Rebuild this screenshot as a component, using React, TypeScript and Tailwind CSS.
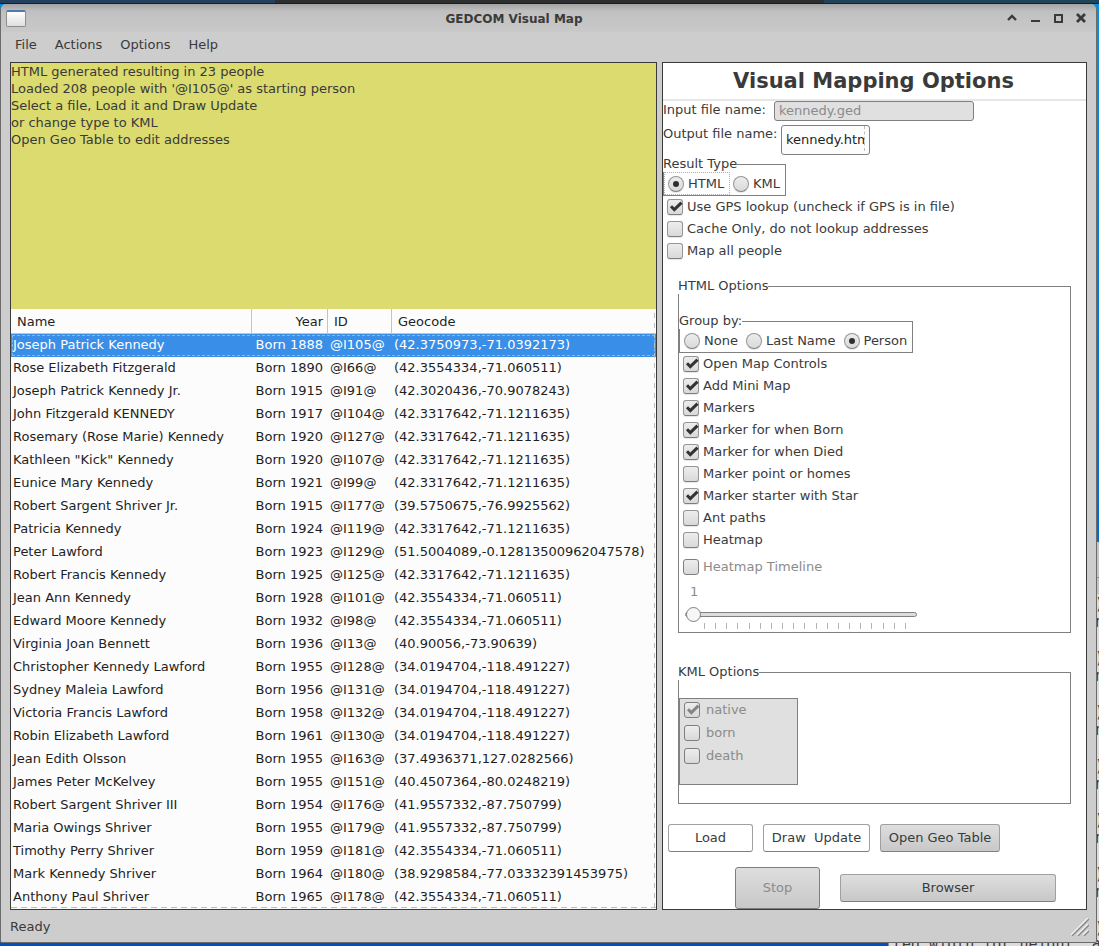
import { useState, type ReactNode } from "react";

const people: [string, string, string, string][] = [
  ["Joseph Patrick Kennedy", "Born 1888", "@I105@", "(42.3750973,-71.0392173)"],
  ["Rose Elizabeth Fitzgerald", "Born 1890", "@I66@", "(42.3554334,-71.060511)"],
  ["Joseph Patrick Kennedy Jr.", "Born 1915", "@I91@", "(42.3020436,-70.9078243)"],
  ["John Fitzgerald KENNEDY", "Born 1917", "@I104@", "(42.3317642,-71.1211635)"],
  ["Rosemary (Rose Marie) Kennedy", "Born 1920", "@I127@", "(42.3317642,-71.1211635)"],
  ['Kathleen "Kick" Kennedy', "Born 1920", "@I107@", "(42.3317642,-71.1211635)"],
  ["Eunice Mary Kennedy", "Born 1921", "@I99@", "(42.3317642,-71.1211635)"],
  ["Robert Sargent Shriver Jr.", "Born 1915", "@I177@", "(39.5750675,-76.9925562)"],
  ["Patricia Kennedy", "Born 1924", "@I119@", "(42.3317642,-71.1211635)"],
  ["Peter Lawford", "Born 1923", "@I129@", "(51.5004089,-0.12813500962047578)"],
  ["Robert Francis Kennedy", "Born 1925", "@I125@", "(42.3317642,-71.1211635)"],
  ["Jean Ann Kennedy", "Born 1928", "@I101@", "(42.3554334,-71.060511)"],
  ["Edward Moore Kennedy", "Born 1932", "@I98@", "(42.3554334,-71.060511)"],
  ["Virginia Joan Bennett", "Born 1936", "@I13@", "(40.90056,-73.90639)"],
  ["Christopher Kennedy Lawford", "Born 1955", "@I128@", "(34.0194704,-118.491227)"],
  ["Sydney Maleia Lawford", "Born 1956", "@I131@", "(34.0194704,-118.491227)"],
  ["Victoria Francis Lawford", "Born 1958", "@I132@", "(34.0194704,-118.491227)"],
  ["Robin Elizabeth Lawford", "Born 1961", "@I130@", "(34.0194704,-118.491227)"],
  ["Jean Edith Olsson", "Born 1955", "@I163@", "(37.4936371,127.0282566)"],
  ["James Peter McKelvey", "Born 1955", "@I151@", "(40.4507364,-80.0248219)"],
  ["Robert Sargent Shriver III", "Born 1954", "@I176@", "(41.9557332,-87.750799)"],
  ["Maria Owings Shriver", "Born 1955", "@I179@", "(41.9557332,-87.750799)"],
  ["Timothy Perry Shriver", "Born 1959", "@I181@", "(42.3554334,-71.060511)"],
  ["Mark Kennedy Shriver", "Born 1964", "@I180@", "(38.9298584,-77.03332391453975)"],
  ["Anthony Paul Shriver", "Born 1965", "@I178@", "(42.3554334,-71.060511)"],
];

const log = [
  "HTML generated resulting in 23 people",
  "Loaded 208 people with '@I105@' as starting person",
  "Select a file, Load it and Draw Update",
  "or change type to KML",
  "Open Geo Table to edit addresses",
];

const mapOptions: [string, boolean][] = [
  ["Open Map Controls", true],
  ["Add Mini Map", true],
  ["Markers", true],
  ["Marker for when Born", true],
  ["Marker for when Died", true],
  ["Marker point or homes", false],
  ["Marker starter with Star", true],
  ["Ant paths", false],
  ["Heatmap", false],
];

function Check({ label, checked = false, disabled = false, className = "h-[22px] gap-1" }: {
  label: string;
  checked?: boolean;
  disabled?: boolean;
  className?: string;
}) {
  return (
    <label className={`flex items-center ${disabled ? "text-[#8b8b8b]" : ""} ${className}`}>
      <span className="relative flex size-4 shrink-0">
        <input
          type="checkbox"
          defaultChecked={checked}
          disabled={disabled}
          className="peer size-4 appearance-none rounded-[3px] border border-[#969696] border-b-[#7d7d7d] bg-linear-to-b from-[#ededed] to-[#d9d9d9] shadow-[0_1px_1px_#0000001a] disabled:border-[#7f7f7f] disabled:shadow-none"
        />
        <svg viewBox="0 0 16 16" className="pointer-events-none absolute inset-0 hidden size-4 peer-checked:block">
          <path d="M4 7.300 7.300 10.600 14.500 3.600" fill="none" stroke={disabled ? "#858585" : "#333333"} strokeWidth="3" />
        </svg>
      </span>
      {label}
    </label>
  );
}

function Radio({ name, label, checked = false, className = "" }: {
  name: string;
  label: string;
  checked?: boolean;
  className?: string;
}) {
  return (
    <label className={`flex items-center gap-1 ${className}`}>
      <span className="relative flex size-4 shrink-0 items-center justify-center">
        <input
          type="radio"
          name={name}
          defaultChecked={checked}
          className="peer size-4 appearance-none rounded-full border border-[#969696] border-b-[#7d7d7d] bg-linear-to-b from-[#ededed] to-[#d9d9d9] shadow-[0_1px_1px_#0000001a]"
        />
        <span className="pointer-events-none absolute hidden size-[6px] rounded-full bg-[#2f2f2f] peer-checked:block" />
      </span>
      {label}
    </label>
  );
}

function Group({ title, className = "", children }: { title: string; className?: string; children: ReactNode }) {
  return (
    <fieldset className={`border border-[#808080] ${className}`}>
      <legend className="-ml-px h-4 bg-white leading-4">{title}</legend>
      {children}
    </fieldset>
  );
}

function PushButton({ className, disabled, children }: { className: string; disabled?: boolean; children: ReactNode }) {
  return (
    <button
      type="button"
      disabled={disabled}
      className={`rounded-[3px] border border-[#a0a0a0] border-b-[#7f7f7f] whitespace-pre disabled:border-[#7f7f7f] disabled:text-[#8b8b8b] ${className}`}
    >
      {children}
    </button>
  );
}

function Desktop() {
  return (
    <div aria-hidden="true" className="absolute inset-0 overflow-hidden bg-linear-to-b from-[#0a90e0] to-[#0050c4] font-['DejaVu_Sans_Mono',monospace] text-[15px] leading-[18px] text-[#3c3c3c]">
      <div className="absolute inset-x-0 top-0 h-1 border-b border-[#1c1e20] bg-linear-to-r from-[#24405e] from-10% to-[#1f4458]">
        <div className="mx-auto h-[3px] w-1/2 bg-[#2c2e30]" />
      </div>
      <div className="absolute top-[542px] right-0 bottom-0 left-[888px] border-l border-[#8a8a8a] bg-[#dcdcdc]">
        <div className="h-9 border-b border-[#8e8e8e] bg-[#c4c4c4]" />
        <div className="h-4 bg-[#c4c4c4]" />
        <div className="absolute top-[53px] -right-[5px] whitespace-pre">
          {[0, 1, 2, 3, 4, 5].map((n) => (
            <div key={n} className="h-[54px]">
              <div>)</div>
              <div>n</div>
            </div>
          ))}
          <div>)</div>
        </div>
        <div className="absolute top-[393px] left-1 whitespace-pre">red width for height: a</div>
      </div>
    </div>
  );
}

export default function App() {
  const [selected, setSelected] = useState(0);

  return (
    <div className="relative flex min-h-screen flex-col overflow-hidden pt-1 pr-[2px] pb-1 font-['DejaVu_Sans','Liberation_Sans',sans-serif] text-[13px] text-[#3a3a3a]">
      <Desktop />
      <div className="relative flex grow flex-col rounded-t-[6px] rounded-b-[2px] border border-t-0 border-[#6b6b6b] bg-[#cdcdcd]">
        <header className="flex h-7 items-center rounded-t-[6px] bg-linear-to-b from-[#a2a2a2] via-[#c0c0c0] via-25% to-[#c9c9c9] pr-[10px] pl-[5px]">
          <div className="h-[17px] w-5 rounded-[2px] border border-[#8d8d8d] border-t-2 border-t-[#4f79b0] bg-linear-to-b from-white to-[#dde0dc]" />
          <h1 className="grow pt-px pr-[5px] text-center text-[12px] font-bold">GEDCOM Visual Map</h1>
          <div className="flex gap-[13px]">
            <button type="button" aria-label="Shade">
              <svg viewBox="0 0 10 10" className="size-[10px]"><path d="M1 7 5 3 9 7" fill="none" stroke="#3a3a3a" strokeWidth="2.4" /></svg>
            </button>
            <button type="button" aria-label="Minimize">
              <svg viewBox="0 0 10 10" className="size-[10px]"><path d="M1 8h9" stroke="#3a3a3a" strokeWidth="2" /></svg>
            </button>
            <button type="button" aria-label="Maximize">
              <svg viewBox="0 0 10 10" className="size-[10px]"><path d="M2 2h7v7H2z" fill="none" stroke="#3a3a3a" strokeWidth="2" /></svg>
            </button>
            <button type="button" aria-label="Close">
              <svg viewBox="0 0 10 10" className="size-[10px]"><path d="M1 1 9 9M9 1 1 9" stroke="#3a3a3a" strokeWidth="2.8" /></svg>
            </button>
          </div>
        </header>

        <nav className="flex h-[30px] items-start gap-[18px] pt-[5px] pl-[14px] leading-4">
          {["File", "Actions", "Options", "Help"].map((item) => (
            <button key={item} type="button">{item}</button>
          ))}
        </nav>

        <main className="flex grow gap-[5px] px-[9px]">
          <section className="relative flex min-w-0 grow flex-col border border-[#3a3a3a] bg-[#fcfcfc]">
            <div className="h-[246px] bg-[#dbdb70] leading-[17px]">
              {log.map((line) => (
                <p key={line}>{line}</p>
              ))}
            </div>
            <table className="w-full table-fixed border-separate border-spacing-0 text-left whitespace-nowrap text-[#1f1f1f]">
              <colgroup>
                <col className="w-[241px]" />
                <col className="w-[76px]" />
                <col className="w-[64px]" />
                <col />
              </colgroup>
              <thead>
                <tr className="h-[25px] [&>th]:border-b [&>th]:border-[#c4c4c4] [&>th]:p-0 [&>th]:pt-px [&>th]:pl-[6px] [&>th]:font-normal">
                  <th className="border-r">Name</th>
                  <th className="border-r text-right"><span className="pr-1">Year</span></th>
                  <th className="border-r">ID</th>
                  <th>Geocode</th>
                </tr>
              </thead>
              <tbody>
                {people.map(([name, year, id, geo], i) => (
                  <tr
                    key={id}
                    onClick={() => setSelected(i)}
                    className={`h-[23px] leading-4 [&>td]:p-0 [&>td]:pb-px [&>td]:pl-[2px] ${
                      i === selected ? "bg-[#398ee7] text-white outline-1 -outline-offset-2 outline-dashed outline-[#7fb8f2]" : ""
                    }`}
                  >
                    <td>{name}</td>
                    <td className="text-right"><span className="pr-[5px]">{year}</span></td>
                    <td>{id}</td>
                    <td>{geo}</td>
                  </tr>
                ))}
              </tbody>
            </table>
            <div className="pointer-events-none absolute inset-x-0 bottom-px h-px bg-[repeating-linear-gradient(90deg,#bdbdbd_0_6px,transparent_6px_10px)]" />
            <div className="pointer-events-none absolute top-[250px] right-px bottom-0 w-px bg-[repeating-linear-gradient(180deg,#bdbdbd_0_5px,transparent_5px_10px)]" />
          </section>

          <section className="flex w-[425px] shrink-0 flex-col border border-[#3a3a3a] bg-white">
            <h2 className="h-[38px] border-b-2 border-[#e6e6e6] pr-[2px] text-center text-[21px] leading-[37px] font-bold">
              Visual Mapping Options
            </h2>

            <div className="flex h-6 items-start">
              <label htmlFor="input-file" className="w-[111px] leading-[17px]">Input file name:</label>
              <input
                id="input-file"
                disabled
                defaultValue="kennedy.ged"
                className="h-5 w-[200px] rounded-[3px] border border-[#808080] bg-[#e0e0e0] px-1 pb-px text-[#8b8b8b]"
              />
            </div>
            <div className="flex h-[31px] items-start">
              <label htmlFor="output-file" className="w-[118px] leading-[17px]">Output file name:</label>
              <div className="relative h-[30px] w-[89px]">
                <input
                  id="output-file"
                  defaultValue="kennedy.html"
                  className="h-full w-full rounded-[3px] border border-[#808080] bg-[#fcfcfc] px-1 pb-[2px] text-[#1f1f1f]"
                />
                <span className="pointer-events-none absolute top-px right-[5px] bottom-1 border-l border-dashed border-[#bdbdbd]" />
              </div>
            </div>

            <Group title="Result Type" className="w-[123px]">
              <div className="flex h-[23px] items-center">
                <Radio name="result" label="HTML" checked className="h-[23px] w-[66px] border border-dotted border-[#b0b0b0] pl-[3px]" />
                <Radio name="result" label="KML" className="pl-[3px]" />
              </div>
            </Group>

            <div className="pl-1">
              <Check label="Use GPS lookup (uncheck if GPS is in file)" checked />
              <Check label="Cache Only, do not lookup addresses" />
              <Check label="Map all people" />
            </div>

            <Group title="HTML Options" className="mt-4 mr-[15px] ml-[15px] h-[355px]">
              <Group title="Group by:" className="mt-[19px] w-[234px]">
                <div className="flex h-[23px] items-center gap-2 pl-1">
                  <Radio name="group" label="None" />
                  <Radio name="group" label="Last Name" />
                  <Radio name="group" label="Person" checked />
                </div>
              </Group>
              <div className="pl-1">
                {mapOptions.map(([label, on]) => (
                  <Check key={label} label={label} checked={on} />
                ))}
                <Check label="Heatmap Timeline" disabled className="mt-[5px] h-[22px] gap-1" />
              </div>
              <div className="pt-[6px] pl-[6px]">
                <label htmlFor="timeline" className="block pl-[5px] leading-4 text-[#8b8b8b]">1</label>
                <input
                  id="timeline"
                  type="range"
                  disabled
                  min={1}
                  max={20}
                  defaultValue={1}
                  className="mt-[6px] block h-4 w-[232px] appearance-none bg-transparent [&::-webkit-slider-runnable-track]:h-[5px] [&::-webkit-slider-runnable-track]:rounded-full [&::-webkit-slider-runnable-track]:border [&::-webkit-slider-runnable-track]:border-[#808080] [&::-webkit-slider-runnable-track]:bg-[#dcdcdc] [&::-webkit-slider-thumb]:-mt-[6px] [&::-webkit-slider-thumb]:size-[15px] [&::-webkit-slider-thumb]:appearance-none [&::-webkit-slider-thumb]:rounded-full [&::-webkit-slider-thumb]:border [&::-webkit-slider-thumb]:border-[#808080] [&::-webkit-slider-thumb]:bg-[#f6f6f6]"
                />
                <div className="mt-px ml-[19px] flex h-[6px] w-[202px] justify-between">
                  {Array.from({ length: 19 }, (_, n) => (
                    <span key={n} className="w-px bg-[#b4b4b4]" />
                  ))}
                </div>
              </div>
            </Group>

            <Group title="KML Options" className="mt-[31px] mr-[15px] ml-[15px] h-[140px]">
              <div className="mt-[18px] h-[87px] w-[119px] border border-[#808080] bg-[#e0e0e0] pl-1">
                <Check label="native" checked disabled className="h-[22px] gap-[6px]" />
                <Check label="born" disabled className="h-6 gap-[6px]" />
                <Check label="death" disabled className="h-[22px] gap-[6px]" />
              </div>
            </Group>

            <div className="mt-5 flex gap-[10px] pl-[5px]">
              <PushButton className="h-7 w-[85px] bg-white">Load</PushButton>
              <PushButton className="h-7 w-[107px] bg-white">{"Draw  Update"}</PushButton>
              <PushButton className="h-7 w-[120px] bg-linear-to-b from-[#dedede] to-[#c8c8c8]">Open Geo Table</PushButton>
            </div>
            <div className="mt-[15px] flex items-center gap-5 pr-[30px] pl-[72px]">
              <PushButton disabled className="h-[42px] w-[85px] bg-linear-to-b from-[#dedede] to-[#c8c8c8]">Stop</PushButton>
              <PushButton className="h-7 grow bg-linear-to-b from-[#dedede] to-[#c8c8c8]">Browser</PushButton>
            </div>
          </section>
        </main>

        <footer className="flex h-8 items-center justify-between pr-[7px] pl-[9px]">
          <span className="pt-[2px]">Ready</span>
          <svg viewBox="0 0 18 18" className="mt-[2px] size-[18px]" fill="none">
            <path d="M0 17 17 0M6 17 17 6M12 17l5-5" stroke="#f0f0f0" strokeWidth="1.500" />
            <path d="M1 18 18 1M7 18 18 7M13 18l5-5" stroke="#858585" strokeWidth="1.300" />
          </svg>
        </footer>
      </div>
    </div>
  );
}
